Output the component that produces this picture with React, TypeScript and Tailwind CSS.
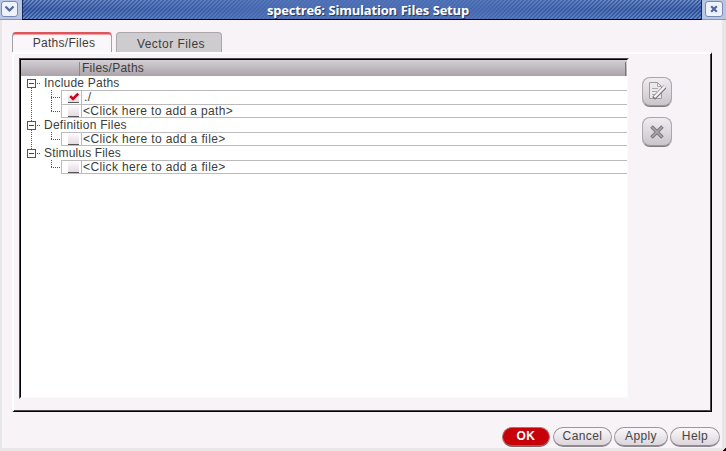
import React from "react";

const font = "font-['Liberation_Sans',Arial,sans-serif]";

function Check({ on }: { on?: boolean }) {
  return (
    <div className="relative mt-px ml-[6px] h-[11px] w-[11px] border-b border-[#555] bg-linear-to-b from-[#fbf8fb] to-[#e4dce4]">
      {on && (
        <svg className="absolute left-px top-0" width="11" height="10" viewBox="0 0 11 10">
          <path d="M1.2 4.2 L4 7 L9.2 1.6" fill="none" stroke="#d40010" strokeWidth="2.6" />
        </svg>
      )}
    </div>
  );
}

function Group({ label, spacing, open, first }: { label: string; spacing: string; open?: boolean; first?: boolean }) {
  return (
    <div className="flex h-[14px]">
      <svg width="23" height="14" shapeRendering="crispEdges" className="shrink-0">
        {!first && <path d="M10.5 0V4" stroke="#555" strokeDasharray="1 1" />}
        {open && <path d="M10.5 12V14" stroke="#555" strokeDasharray="1 1" />}
        <rect x="6.5" y="3.5" width="8" height="8" fill="#fff" stroke="#555" />
        <path d="M8 7.5H13" stroke="#444" />
        <path d="M16 7.5H20" stroke="#555" strokeDasharray="1 1" />
      </svg>
      <span className={`text-[12px] leading-[14px] ${spacing}`}>{label}</span>
    </div>
  );
}

function Item({ label, spacing, on, last, trunk }: { label: string; spacing: string; on?: boolean; last?: boolean; trunk?: boolean }) {
  return (
    <div className="flex h-[14px]">
      <svg width="40" height="14" shapeRendering="crispEdges" className="shrink-0">
        {trunk && <path d="M10.5 0V14" stroke="#555" strokeDasharray="1 1" />}
        <path d={last ? "M30.5 0V8" : "M30.5 0V14"} stroke="#555" strokeDasharray="1 1" />
        <path d="M30 7.5H40" stroke="#555" strokeDasharray="1 1" />
      </svg>
      <div className={`flex flex-1 border-l border-t border-[#bdbabd] ${last ? "border-b" : ""}`}>
        <div className="w-[20px] shrink-0 border-r border-[#bdbabd]">
          <Check on={on} />
        </div>
        <span className={`pl-px text-[12px] leading-[12px] ${spacing}`}>{label}</span>
      </div>
    </div>
  );
}

const small = "h-[20px] rounded-[10px] border border-[#9c969c] border-b-2 border-b-[#8f8a8f] bg-linear-to-b from-[#fbf8fb] to-[#dcd6dc] text-center text-[12px] leading-[17px] text-[#444]";
const tool = "flex h-[30px] w-[30px] items-center justify-center rounded-[8px] border border-[#aca5ac] border-b-[#7d7a7d] bg-linear-to-b from-[#f1ecf1] to-[#c9c4c9] shadow-[inset_0_-1px_0_#9d989d]";

export default function App() {
  return (
    <div className={`flex h-[451px] w-[726px] flex-col overflow-hidden bg-[#e7e7e7] text-[#3c3c3c] ${font}`}>
      <div className="flex h-[20px] shrink-0">
        <div className="flex w-[22px] border-b border-[#8694bd] bg-[#b8c6e4] pl-px pt-px">
          <div className="flex h-[16px] w-[17px] items-center justify-center rounded-[3px] border border-[#7688b4] bg-[#eef2fb]">
            <svg width="11" height="8" viewBox="0 0 11 8">
              <path d="M1.5 1.5 L5.5 5.5 L9.5 1.5" fill="none" stroke="#50669c" strokeWidth="2.2" />
            </svg>
          </div>
        </div>
        <div className="flex flex-1 justify-center border-x border-b border-x-[#14295e] border-b-black bg-[linear-gradient(90deg,transparent,rgba(78,112,182,0.85)_42%,rgba(78,112,182,0.85)_60%,transparent),repeating-linear-gradient(135deg,rgba(24,50,112,0.55)_0px_0.8px,transparent_0.8px_2.828px),linear-gradient(180deg,#7090ce,#476db6_50%,#668bd0)]">
          <span className="mr-[-12px] font-['Open_Sans','Noto_Sans',sans-serif] text-[13px] leading-[20px] font-bold tracking-[-0.2px] [word-spacing:0.6px] text-white [text-shadow:1px_1px_0_#26385f]">spectre6: Simulation Files Setup</span>
        </div>
        <div className="flex w-[24px] border-b border-[#8694bd] bg-[#b8c6e4] pl-[3px] pt-px">
          <div className="flex h-[16px] w-[18px] items-center justify-center rounded-[3px] border border-[#7688b4] bg-[#eef2fb]">
            <svg width="8" height="8" viewBox="0 0 8 8">
              <path d="M1.2 1.2 L6.8 6.8 M6.8 1.2 L1.2 6.8" stroke="#50669c" strokeWidth="2.2" />
            </svg>
          </div>
        </div>
      </div>
      <div className="mr-[4px] ml-[2px] h-[428px] shrink-0 bg-[#f7f3f7] pl-[10px] pt-[12px]">
        <div className="flex h-[20px] gap-[4px]">
          <div className="h-[20px] w-[100px] rounded-t-[4px] border-x border-t-2 border-x-[#a5a0a5] border-t-[#d9575c] bg-[#faf7fa] pl-[4px] text-center text-[12px] leading-[19px] tracking-[0.3px] shadow-[inset_0_1px_0_#f6a0a4]">Paths/Files</div>
          <div className="h-[20px] w-[106px] rounded-t-[4px] border border-b-0 border-[#aaa6aa] bg-[#cfcccf] pl-[4px] text-center text-[12px] leading-[23px] tracking-[0.45px]">Vector Files</div>
        </div>
        <div className="flex h-[360px] w-[700px] border border-t-2 border-l-2 border-t-white border-r-black border-b-black border-l-white pt-[4px] pl-[5px] shadow-[inset_-1px_-1px_0_#4a4a4a]">
          <div className="h-[341px] w-[610px] border border-t-[#4a4a4a] border-r-[#f7f3f7] border-b-[#f7f3f7] border-l-[#4a4a4a]">
            <div className="h-[339px] border border-t-black border-r-[#fcf9fc] border-b-[#fcf9fc] border-l-black bg-white">
              <div className="flex h-[16px] bg-linear-to-b from-[#d5d0d5] to-[#aaa3aa] pt-[2px]">
                <div className="w-[59px] shrink-0 border-r border-[#888]" />
                <span className="flex-1 pl-[2px] text-[12px] leading-[13px] tracking-[0.25px]">Files/Paths</span>
                <div className="mr-px w-px bg-[#777]" />
              </div>
              <Group label="Include Paths" spacing="tracking-[0.22px]" open first />
              <Item label="./" spacing="tracking-[0.3px] ml-px" on trunk />
              <Item label="<Click here to add a path>" spacing="tracking-[0.36px]" last trunk />
              <Group label="Definition Files" spacing="tracking-[0.26px]" open />
              <Item label="<Click here to add a file>" spacing="tracking-[0.38px]" last trunk />
              <Group label="Stimulus Files" spacing="tracking-[0.16px]" />
              <Item label="<Click here to add a file>" spacing="tracking-[0.38px]" last />
            </div>
          </div>
          <div className="flex flex-col gap-[10px] pt-[19px] pl-[13px]">
            <button className={tool}>
              <svg width="18" height="18" viewBox="0 0 18 18" className="mb-[2px] shrink-0">
                <path d="M1.5 0.5H9.5L13.5 4.5V16.5H1.5Z" fill="#ebe8eb" stroke="#9e9a9e" />
                <path d="M9.5 0.5V4.5H13.5M4 6.5H10M4 9.5H9M4 12.5H8" fill="none" stroke="#aaa6aa" />
                <path d="M17.2 4.6L5.6 16.4" stroke="#777477" strokeWidth="4" />
                <path d="M17 4.4L6.4 15.2" stroke="#f6f4f6" strokeWidth="2.3" />
              </svg>
            </button>
            <button className={tool}>
              <svg width="14" height="14" viewBox="0 0 14 14" className="mr-px shrink-0">
                <path d="M1.5 1.5L12.5 12.5M12.5 1.5L1.5 12.5" stroke="#787478" strokeWidth="3.6" />
                <path d="M2 2L12 12M12 2L2 12" stroke="#aaa6aa" strokeWidth="1.7" />
              </svg>
            </button>
          </div>
        </div>
        <div className="flex pt-[15px] pl-[490px]">
          <button className="h-[20px] w-[48px] rounded-[10px] border border-[#b07075] border-b-2 border-b-[#8a6265] bg-[#c8000a] text-[12px] leading-[17px] font-bold tracking-[0.5px] text-white">OK</button>
          <button className={`${small} ml-[3px] w-[59px] tracking-[0.4px]`}>Cancel</button>
          <button className={`${small} ml-[2px] w-[54px] tracking-[0.4px]`}>Apply</button>
          <button className={`${small} ml-[2px] w-[50px] tracking-[0.4px]`}>Help</button>
        </div>
      </div>
      <div className="flex flex-1 items-end justify-end">
        <div className="h-[3px] w-[3px] bg-[linear-gradient(135deg,transparent_50%,#000_50%)]" />
      </div>
    </div>
  );
}
